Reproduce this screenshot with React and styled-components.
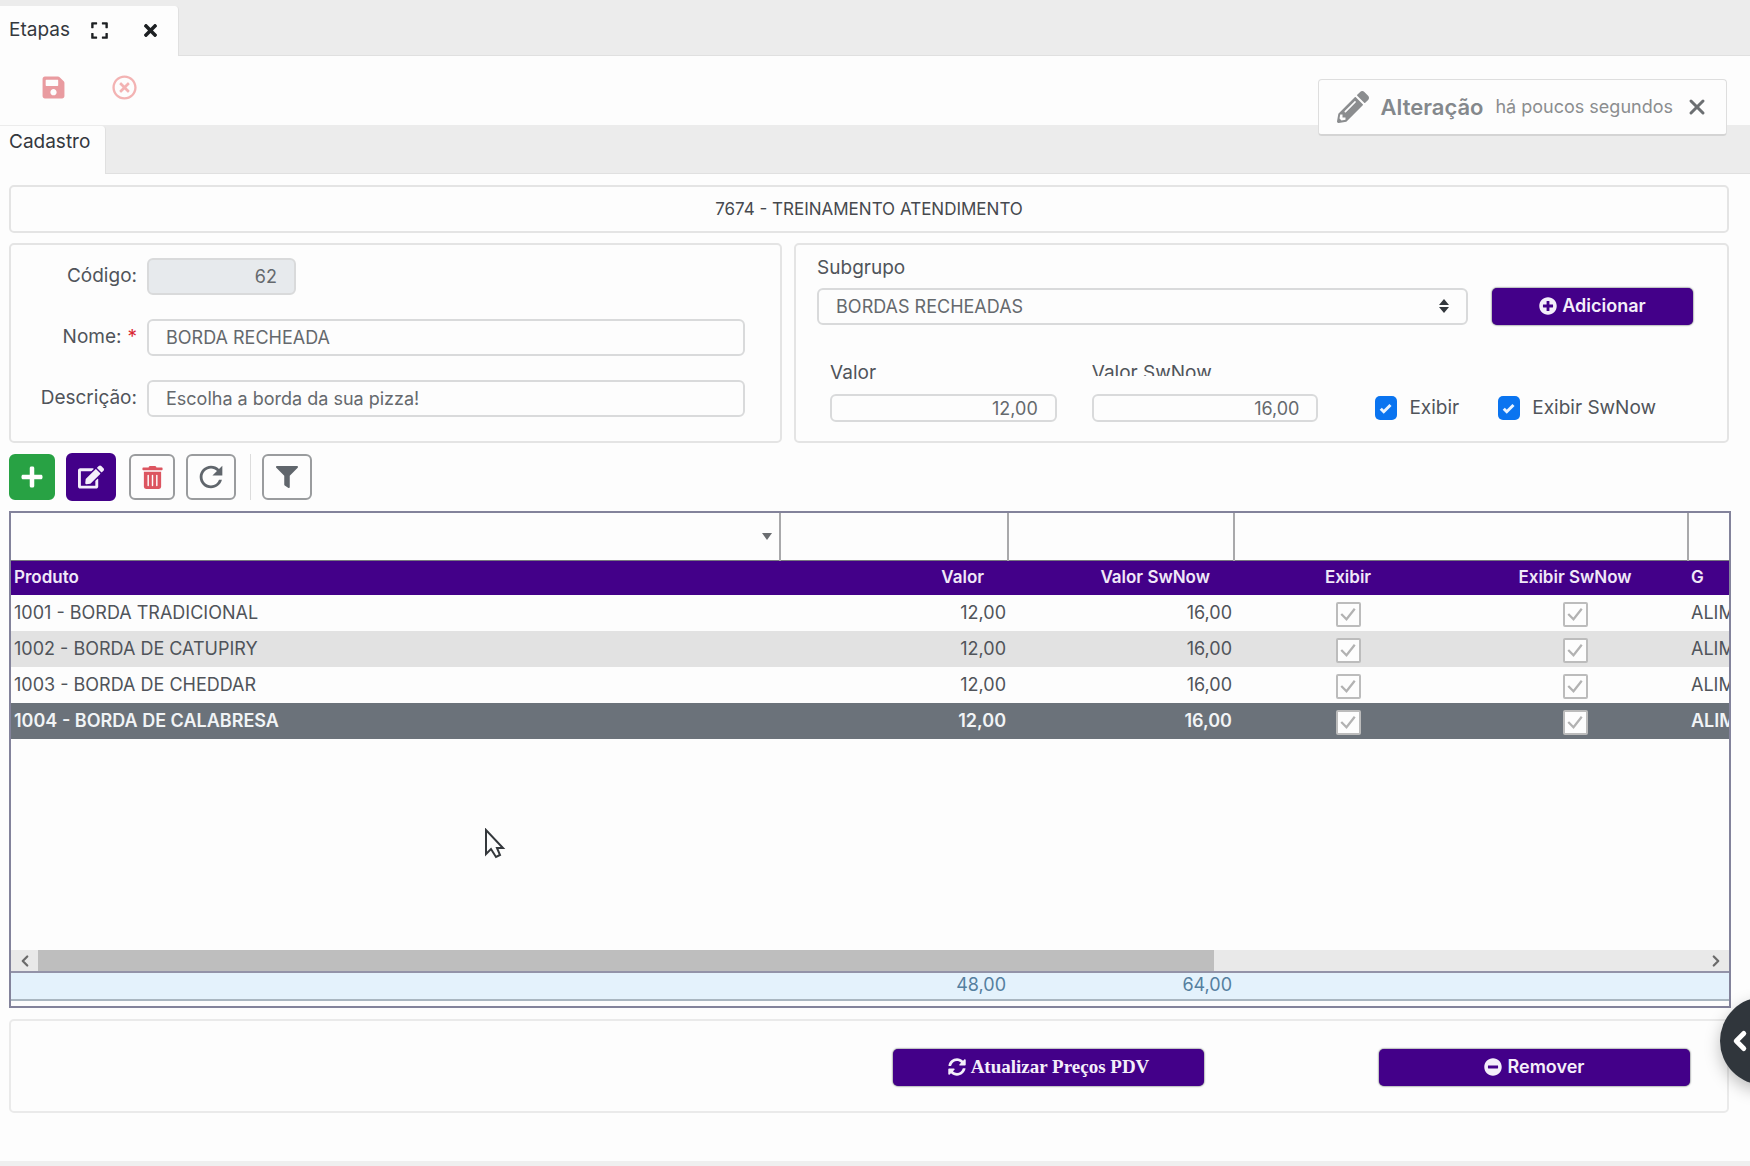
import React from 'react';
import styled, { createGlobalStyle, css } from 'styled-components';
import {
  FaEdit, FaExpand, FaFilter, FaMinusCircle, FaPencilAlt, FaPlus, FaPlusCircle,
  FaRegTimesCircle, FaSave, FaSyncAlt, FaTimes, FaTrashAlt,
} from 'react-icons/fa';
import { MdRefresh } from 'react-icons/md';
import { ChevronLeft, ChevronRight, X } from 'lucide-react';

const purple = '#430089';
const line = '#e4e4e4';
const gridLine = '#83839b';

const tick = (color, width, path) => `url("data:image/svg+xml,${encodeURIComponent(
  `<svg xmlns='http://www.w3.org/2000/svg' viewBox='0 0 24 24' fill='none' stroke='${color}' stroke-width='${width}'><path d='${path}'/></svg>`,
)}")`;

const GlobalStyle = createGlobalStyle`
  *, *::before, *::after {
    box-sizing: border-box;
  }

  body {
    margin: 0;
    background: #fdfdfd;
    color: #50545a;
    font-family: Inter, "Liberation Sans", sans-serif;
    font-size: 18px;
    line-height: 24px;
    overflow-x: hidden;
  }

  button, input, select {
    margin: 0;
    font: inherit;
    color: inherit;
  }

  button {
    padding: 0;
    border: 0;
    background: none;
    cursor: pointer;
  }
`;

const Page = styled.div`
  display: flex;
  flex-direction: column;
  min-height: 100vh;
  border-bottom: 5px solid #efefef;
`;

const TabStrip = styled.div`
  display: flex;
  align-items: stretch;
  height: ${({ $height }) => $height}px;
  padding-top: ${({ $top }) => $top}px;
  background: #ececec;
  box-shadow: inset 0 -1px #e0e0e0;
`;

const Tab = styled.div`
  display: flex;
  align-items: ${({ $top }) => ($top ? 'flex-start' : 'center')};
  gap: 20px;
  padding: ${({ $top }) => ($top ? '4px 15px 0 9px' : '0 18px 2px 9px')};
  border-right: 1px solid #e0e0e0;
  border-top-right-radius: 4px;
  background: #fdfdfd;
  color: #34383d;
  font-size: 19px;
`;

const TabButton = styled.button`
  display: flex;
  color: #1d2023;

  & + & {
    margin-left: 12px;
  }
`;

const ActionBar = styled.div`
  display: flex;
  align-items: center;
  gap: 46px;
  height: 69px;
  padding: 0 0 6px 41px;
`;

const ActionButton = styled.button`
  display: flex;
  color: ${({ $color }) => $color};
`;

const Toast = styled.div`
  position: absolute;
  top: 79px;
  right: 23px;
  display: flex;
  align-items: center;
  height: 57px;
  padding: 0 17px 0 18px;
  gap: 12px;
  border: 1px solid #dedede;
  border-bottom: 2px solid #d4d4d4;
  border-radius: 4px;
  background: #fdfdfd;
  color: #8b8d8f;

  strong {
    font-size: 22px;
    font-weight: 600;
    color: #84888c;
  }

  button {
    display: flex;
    color: #6c6f72;
  }
`;

const Main = styled.main`
  display: flex;
  flex: 1;
  flex-direction: column;
  padding: 11px 21px 48px 9px;
`;

const Panel = styled.section`
  border: 2px solid ${line};
  border-radius: 5px;
`;

const Company = styled(Panel)`
  padding: 10px 0;
  color: #46494e;
  font-size: 17px;
  text-align: center;
`;

const FormColumns = styled.div`
  display: grid;
  grid-template-columns: 774fr 936fr;
  gap: 12px;
  margin: 10px 0;
`;

const FormPanel = styled(Panel)`
  min-height: 198px;
  padding: ${({ $wide }) => ($wide ? '11px 34px 0 21px' : '13px 35px 0 19px')};

  label {
    font-size: 19px;
  }
`;

const FieldRow = styled.div`
  display: grid;
  grid-template-columns: 107px 1fr;
  align-items: center;
  gap: 10px;
  margin-bottom: 24px;

  label {
    padding-bottom: 2px;
    text-align: right;
    white-space: nowrap;
  }
`;

const Required = styled.span`
  margin-left: 6px;
  color: #d92632;
`;

const TextInput = styled.input`
  width: 100%;
  min-width: 0;
  height: ${({ $small }) => ($small ? 28 : 37)}px;
  padding: 0 17px;
  border: 2px solid #d9dadb;
  border-radius: 6px;
  background: #fdfdfd;
  color: #65696d;
  outline: 0;

  &:disabled {
    width: 149px;
    background: #e7eaed;
    text-align: right;
  }

  ${({ $small }) => $small && css`
    text-align: right;
  `}
`;

const SubgroupRow = styled.div`
  display: grid;
  grid-template-columns: 651fr 201fr;
  gap: 24px;
  margin-top: 8px;
`;

const SelectBox = styled.div`
  position: relative;

  svg {
    position: absolute;
    top: 10px;
    right: 18px;
    pointer-events: none;
  }
`;

const Select = styled.select`
  width: 100%;
  height: 37px;
  padding: 0 17px;
  border: 2px solid #d9dadb;
  border-radius: 6px;
  appearance: none;
  background: #fdfdfd;
  color: #65696d;
`;

const PrimaryButton = styled.button`
  display: flex;
  align-items: center;
  justify-content: center;
  gap: 5px;
  height: 37px;
  padding-bottom: 2px;
  border-radius: 5px;
  background: ${purple};
  box-shadow: 0 0 2px #22282f;
  color: #f4eefa;
  font-weight: 600;
  white-space: nowrap;
  ${({ $serif }) => $serif && css`
    font-family: "Liberation Serif", serif;
    font-size: 19px;
    font-weight: 700;
  `}
`;

const ValueRow = styled.div`
  display: grid;
  grid-template-columns: 227fr 227fr 340fr;
  gap: 35px;
  align-items: end;
  padding-left: 13px;
  margin-top: 36px;
`;

const ValueField = styled.div`
  label {
    display: block;
    margin-bottom: 9px;
    ${({ $cut }) => $cut && css`
      clip-path: inset(0 0 9px 0);
    `}
  }
`;

const Checks = styled.div`
  display: flex;
  gap: 39px;
  padding-left: 22px;

  label {
    display: flex;
    align-items: center;
    gap: 12px;
    height: 28px;
    white-space: nowrap;
  }
`;

const BlueCheck = styled.input`
  width: 22px;
  height: 24px;
  border-radius: 5px;
  appearance: none;
  background: #0a74f0 ${tick('#e9f3ff', 4, 'M5 13l4 4 9-9')} center / 18px no-repeat;
`;

const GridTools = styled.div`
  display: flex;
  align-items: center;
  height: 48px;
  margin-bottom: 10px;
`;

const ToolButton = styled.button`
  display: flex;
  align-items: center;
  justify-content: center;
  width: ${({ $narrow }) => ($narrow ? 46 : 50)}px;
  height: ${({ $active }) => ($active ? 48 : 46)}px;
  margin-right: ${({ $space }) => $space || 11}px;
  border: 2px solid ${({ $border }) => $border || '#9a9c9e'};
  border-radius: 6px;
  background: ${({ $fill }) => $fill || '#fdfdfd'};
  color: ${({ $color }) => $color || '#60666c'};
`;

const Divider = styled.span`
  width: 1px;
  height: 46px;
  margin-right: 11px;
  background: #dcdcdc;
`;

const Grid = styled.section`
  display: flex;
  flex: 1;
  flex-direction: column;
  min-height: 480px;
  margin-right: -2px;
  border: 2px solid ${gridLine};
`;

const GridBody = styled.div`
  flex: 1;
  overflow: hidden;
`;

const Table = styled.table`
  width: 100%;
  table-layout: fixed;
  border-collapse: collapse;
`;

const FilterCell = styled.td`
  position: relative;
  height: 47px;
  padding: 0;
  border-right: ${({ $line }) => ($line ? '2px solid #a9a9ab' : '0')};
  border-bottom: 1px solid #77777f;
  background: #fdfdfd;

  input, select {
    display: block;
    width: 100%;
    height: 46px;
    padding: 0 8px;
    border: 0;
    appearance: none;
    background: transparent;
    outline: 0;
  }

  svg {
    position: absolute;
    top: 19px;
    right: 7px;
    pointer-events: none;
  }
`;

const HeadCell = styled.th`
  height: 35px;
  padding: 0 ${({ $align }) => ($align === 'right' ? 24 : 2)}px 2px 3px;
  background: ${purple};
  color: #f0e8f8;
  font-size: 17px;
  font-weight: 600;
  text-align: ${({ $align }) => $align || 'left'};
  white-space: nowrap;
`;

const Row = styled.tr`
  height: 36px;
  background: ${({ $striped }) => ($striped ? '#e2e2e2' : '#fdfdfd')};

  ${({ $selected }) => $selected && css`
    background: #6b727a;
    color: #f1f4f6;
    font-weight: 600;
  `}
`;

const Cell = styled.td`
  padding: 0 2px 0 3px;
  overflow: hidden;
  text-align: ${({ $align }) => $align || 'left'};
  white-space: nowrap;
`;

const GridCheck = styled.input`
  display: block;
  width: 25px;
  height: 25px;
  margin: 2px auto 0 !important;
  border: 2px solid #bcbcbc;
  border-radius: 2px;
  appearance: none;
  background: #fdfdfd ${tick('#b2b2b2', 3, 'M3 12l7 7 11-14')} center / 18px no-repeat;
`;

const ScrollBar = styled.div`
  display: flex;
  align-items: stretch;
  height: 21px;
  background: #e9e9e9;

  button {
    display: flex;
    align-items: center;
    justify-content: center;
    width: 27px;
    color: #6b6b6b;
  }
`;

const Track = styled.div`
  flex: 1;
`;

const Thumb = styled.div`
  width: 70.7%;
  height: 100%;
  background: #bebebe;
`;

const Totals = styled.div`
  margin-bottom: 5px;
  border-top: 2px solid #9393a8;
  border-bottom: 2px solid #a9b6c0;
  background: #e4f2fc;
  color: #557f9f;

  td {
    height: 26px;
    padding-bottom: 2px;
  }
`;

const BottomPanel = styled(Panel)`
  display: grid;
  grid-template-columns: 707fr 311fr 311fr;
  gap: 175px;
  margin-top: 11px;
  padding: 28px 37px 25px 0;
  border-color: #eaeaea;

  > :first-child {
    grid-column: 2;
  }
`;

const SideToggle = styled.button`
  position: fixed;
  right: -58px;
  bottom: 81px;
  display: flex;
  align-items: center;
  width: 88px;
  height: 88px;
  padding-left: 5px;
  border-radius: 50%;
  background: #30363c;
  box-shadow: 0 6px 16px rgba(0, 0, 0, 0.25);
  color: #fff;
`;

const Pointer = styled.svg`
  position: absolute;
  top: 828px;
  left: 484px;
  pointer-events: none;
`;

const products = [
  { code: '1001', name: 'BORDA TRADICIONAL' },
  { code: '1002', name: 'BORDA DE CATUPIRY' },
  { code: '1003', name: 'BORDA DE CHEDDAR' },
  { code: '1004', name: 'BORDA DE CALABRESA' },
];

function Columns() {
  return (
    <colgroup>
      <col />
      <col width="228" />
      <col width="226" />
      <col width="227" />
      <col width="227" />
      <col width="41" />
    </colgroup>
  );
}

function ProductGrid() {
  return (
    <Grid>
      <GridBody>
        <Table>
          <Columns />
          <thead>
            <tr>
              <FilterCell $line>
                <select aria-label="Filtrar produto" defaultValue=""><option value="" /></select>
                <svg width="10" height="8" viewBox="0 0 10 8"><path d="M0 1h10L5 8z" fill="#6a6d70" /></svg>
              </FilterCell>
              <FilterCell $line><input aria-label="Filtrar valor" /></FilterCell>
              <FilterCell $line><input aria-label="Filtrar valor SwNow" /></FilterCell>
              <FilterCell />
              <FilterCell $line />
              <FilterCell><input aria-label="Filtrar grupo" /></FilterCell>
            </tr>
            <tr>
              <HeadCell>Produto</HeadCell>
              <HeadCell $align="right">Valor</HeadCell>
              <HeadCell $align="right">Valor SwNow</HeadCell>
              <HeadCell $align="center">Exibir</HeadCell>
              <HeadCell $align="center">Exibir SwNow</HeadCell>
              <HeadCell>G</HeadCell>
            </tr>
          </thead>
          <tbody>
            {products.map(({ code, name }, index) => (
              <Row key={code} $striped={index === 1} $selected={index === 3}>
                <Cell>{`${code} - ${name}`}</Cell>
                <Cell $align="right">12,00</Cell>
                <Cell $align="right">16,00</Cell>
                <Cell><GridCheck type="checkbox" aria-label={`Exibir ${code}`} defaultChecked disabled /></Cell>
                <Cell><GridCheck type="checkbox" aria-label={`Exibir SwNow ${code}`} defaultChecked disabled /></Cell>
                <Cell>ALIM</Cell>
              </Row>
            ))}
          </tbody>
        </Table>
      </GridBody>
      <ScrollBar>
        <button type="button" aria-label="Rolar para a esquerda"><ChevronLeft size={18} strokeWidth={3} /></button>
        <Track><Thumb /></Track>
        <button type="button" aria-label="Rolar para a direita"><ChevronRight size={18} strokeWidth={3} /></button>
      </ScrollBar>
      <Totals>
        <Table>
          <Columns />
          <tbody>
            <tr>
              <Cell />
              <Cell $align="right">48,00</Cell>
              <Cell $align="right">64,00</Cell>
              <Cell />
              <Cell />
              <Cell />
            </tr>
          </tbody>
        </Table>
      </Totals>
    </Grid>
  );
}

function StageForm() {
  return (
    <FormColumns>
      <FormPanel>
        <FieldRow>
          <label htmlFor="codigo">Código:</label>
          <TextInput id="codigo" defaultValue="62" disabled />
        </FieldRow>
        <FieldRow>
          <label htmlFor="nome">
            Nome:
            <Required>*</Required>
          </label>
          <TextInput id="nome" defaultValue="BORDA RECHEADA" />
        </FieldRow>
        <FieldRow>
          <label htmlFor="descricao">Descrição:</label>
          <TextInput id="descricao" defaultValue="Escolha a borda da sua pizza!" />
        </FieldRow>
      </FormPanel>
      <FormPanel $wide>
        <label htmlFor="subgrupo">Subgrupo</label>
        <SubgroupRow>
          <SelectBox>
            <Select id="subgrupo" defaultValue="1">
              <option value="1">BORDAS RECHEADAS</option>
            </Select>
            <svg width="12" height="16" viewBox="0 0 12 16" fill="#33383d">
              <path d="M6 1l5 6H1zM6 15l5-6H1z" />
            </svg>
          </SelectBox>
          <PrimaryButton type="button">
            <FaPlusCircle size={18} />
            Adicionar
          </PrimaryButton>
        </SubgroupRow>
        <ValueRow>
          <ValueField>
            <label htmlFor="valor">Valor</label>
            <TextInput id="valor" $small defaultValue="12,00" />
          </ValueField>
          <ValueField $cut>
            <label htmlFor="valor-swnow">Valor SwNow</label>
            <TextInput id="valor-swnow" $small defaultValue="16,00" />
          </ValueField>
          <Checks>
            <label>
              <BlueCheck type="checkbox" defaultChecked />
              Exibir
            </label>
            <label>
              <BlueCheck type="checkbox" defaultChecked />
              Exibir SwNow
            </label>
          </Checks>
        </ValueRow>
      </FormPanel>
    </FormColumns>
  );
}

function App() {
  return (
    <Page>
      <GlobalStyle />
      <TabStrip $height={56} $top={6}>
        <Tab>
          Etapas
          <TabButton type="button" aria-label="Expandir"><FaExpand size={19} /></TabButton>
          <TabButton type="button" aria-label="Fechar"><FaTimes size={19} /></TabButton>
        </Tab>
      </TabStrip>
      <ActionBar>
        <ActionButton type="button" aria-label="Salvar" $color="#e99ba0"><FaSave size={25} /></ActionButton>
        <ActionButton type="button" aria-label="Cancelar" $color="#f3b3b3"><FaRegTimesCircle size={25} /></ActionButton>
      </ActionBar>
      <TabStrip $height={49} $top={1}>
        <Tab $top>Cadastro</Tab>
      </TabStrip>
      <Main>
        <Company>7674 - TREINAMENTO ATENDIMENTO</Company>
        <StageForm />
        <GridTools>
          <ToolButton type="button" aria-label="Novo" $narrow $fill="#28a244" $border="#28a244" $color="#fff">
            <FaPlus size={24} />
          </ToolButton>
          <ToolButton type="button" aria-label="Editar" $active $space={13} $fill={purple} $border={purple} $color="#f4eefa">
            <FaEdit size={26} />
          </ToolButton>
          <ToolButton type="button" aria-label="Excluir" $narrow $color="#dc5560"><FaTrashAlt size={23} /></ToolButton>
          <ToolButton type="button" aria-label="Atualizar" $space={14}><MdRefresh size={34} /></ToolButton>
          <Divider />
          <ToolButton type="button" aria-label="Filtrar"><FaFilter size={22} /></ToolButton>
        </GridTools>
        <ProductGrid />
        <BottomPanel>
          <PrimaryButton type="button" $serif>
            <FaSyncAlt size={18} />
            Atualizar Preços PDV
          </PrimaryButton>
          <PrimaryButton type="button">
            <FaMinusCircle size={18} />
            Remover
          </PrimaryButton>
        </BottomPanel>
      </Main>
      <Toast role="status">
        <FaPencilAlt size={32} />
        <strong>Alteração</strong>
        <span>há poucos segundos</span>
        <button type="button" aria-label="Fechar aviso"><X size={24} strokeWidth={3} /></button>
      </Toast>
      <SideToggle type="button" aria-label="Abrir painel">
        <ChevronLeft size={30} strokeWidth={4} />
      </SideToggle>
      <Pointer width="22" height="32" viewBox="0 0 22 32" fill="#fdfdfd" stroke="#34383c" strokeWidth="2">
        <path d="M2 2v24l5-5 5 8 4-2-3-7h6z" />
      </Pointer>
    </Page>
  );
}

export default App;
